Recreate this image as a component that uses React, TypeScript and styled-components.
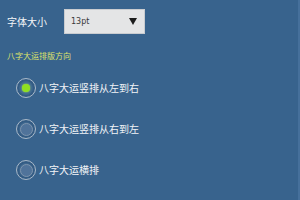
import styled, { createGlobalStyle } from "styled-components"

const GlobalStyle = createGlobalStyle`
	html, body {
		margin: 0;
		padding: 0;
		background: #38638d;
	}
	body {
		font-family: "Noto Sans CJK SC", "DejaVu Sans", sans-serif;
	}
`

const Screen = styled.div`
	width: 298px;
	height: 200px;
	border-right: 2px solid #46709b;
	background: #38638d;
	display: flex;
	flex-direction: column;
	overflow: hidden;
`

const SizeRow = styled.div`
	display: flex;
	align-items: center;
	gap: 17px;
	padding: 9px 0 0 7px;
`

const Label = styled.span`
	color: #f4f6f8;
	font-size: 10px;
	line-height: 12px;
`

const Dropdown = styled.div`
	box-sizing: border-box;
	width: 81px;
	height: 25px;
	border: 1px solid #c9ccd0;
	background: #e4e5e6;
	display: flex;
	align-items: center;
	justify-content: space-between;
	padding: 0 7px 0 6px;
`

const DropdownText = styled.span`
	font-family: "DejaVu Sans", sans-serif;
	font-size: 8px;
	color: #3a3a3a;
`

const Triangle = styled.span`
	width: 0;
	height: 0;
	border-left: 4.5px solid transparent;
	border-right: 4.5px solid transparent;
	border-top: 7px solid #1c1c1c;
`

const SectionTitle = styled.div`
	color: #dfe36a;
	font-size: 8px;
	line-height: 10px;
	padding: 17px 0 0 7px;
`

const RadioList = styled.div`
	display: flex;
	flex-direction: column;
	gap: 21px;
	padding: 17px 0 0 16px;
`

const RadioRow = styled.div`
	display: flex;
	align-items: center;
	gap: 3px;
	height: 20px;
`

const RadioOuter = styled.span`
	width: 18px;
	height: 18px;
	border-radius: 50%;
	border: 1px solid #a9b8c8;
	background: #3f6890;
	display: flex;
	align-items: center;
	justify-content: center;
	box-shadow: inset 0 0 0 2px #345c84;
`

const RadioInner = styled.span<{ $checked: boolean }>`
	width: ${(p) => (p.$checked ? 8 : 11)}px;
	height: ${(p) => (p.$checked ? 8 : 11)}px;
	border-radius: 50%;
	background: ${(p) => (p.$checked ? "#8fe020" : "#50739a")};
	border: ${(p) => (p.$checked ? "none" : "1px solid #7d94ad")};
	box-shadow: ${(p) => (p.$checked ? "0 0 2px #b8f060" : "none")};
`

const RadioLabel = styled.span`
	color: #f2f4f7;
	font-size: 10px;
	line-height: 12px;
`

const options = [
	{ label: "八字大运竖排从左到右", checked: true },
	{ label: "八字大运竖排从右到左", checked: false },
	{ label: "八字大运横排", checked: false },
]

export default function App() {
	return (
		<>
			<GlobalStyle />
			<Screen>
				<SizeRow>
					<Label>字体大小</Label>
					<Dropdown>
						<DropdownText>13pt</DropdownText>
						<Triangle />
					</Dropdown>
				</SizeRow>
				<SectionTitle>八字大运排版方向</SectionTitle>
				<RadioList>
					{options.map((o) => (
						<RadioRow key={o.label}>
							<RadioOuter>
								<RadioInner $checked={o.checked} />
							</RadioOuter>
							<RadioLabel>{o.label}</RadioLabel>
						</RadioRow>
					))}
				</RadioList>
			</Screen>
		</>
	)
}
